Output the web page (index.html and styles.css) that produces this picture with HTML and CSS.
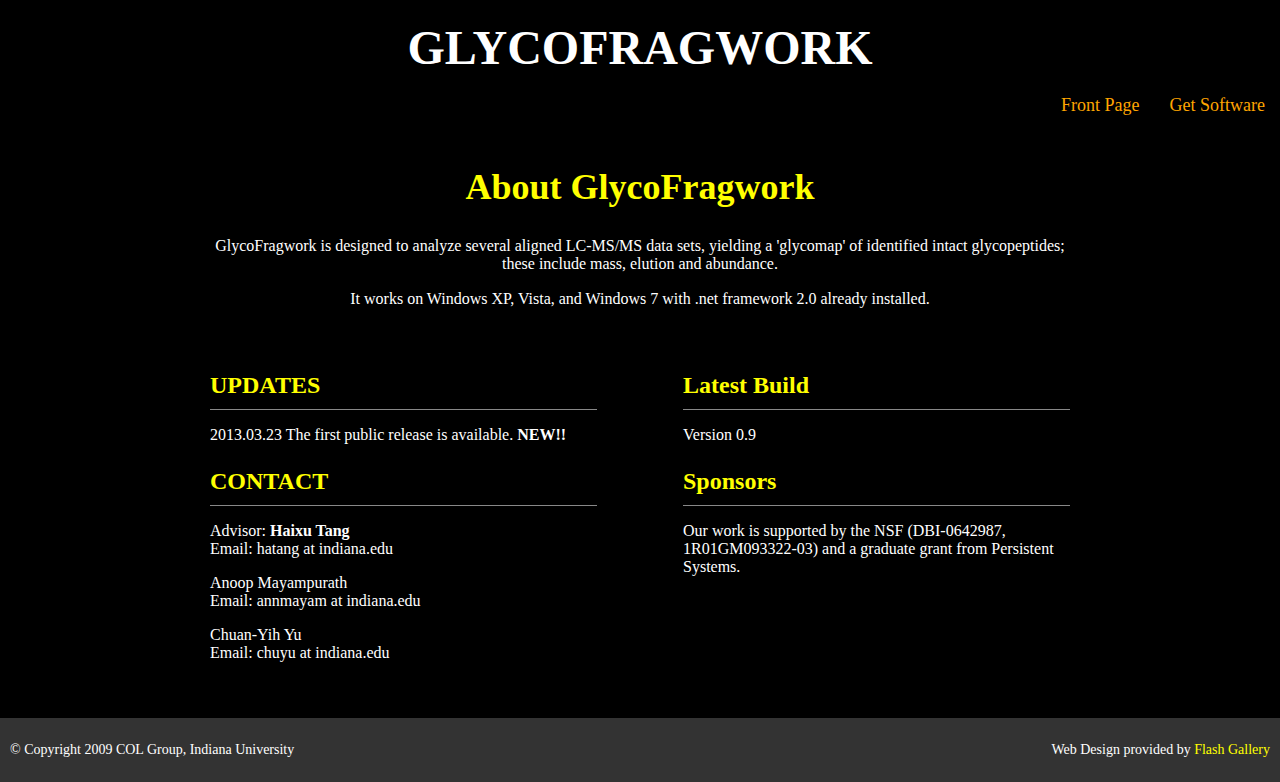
FILE: index.html
```html
<!DOCTYPE html>
<html>
<head>
<meta charset="utf-8">
<title>GlycoFragwork</title>
<link rel="stylesheet" href="styles.css">
</head>
<body>
<div class="page">
  <header class="header">
    <h1 class="site-title">GLYCOFRAGWORK</h1>
    <nav class="nav">
      <a href="#">Front Page</a>
      <a href="#">Get Software</a>
    </nav>
  </header>
  <main class="main">
    <section class="intro">
      <h2 class="intro-title">About GlycoFragwork</h2>
      <p>GlycoFragwork is designed to analyze several aligned LC-MS/MS data sets, yielding a 'glycomap' of identified intact glycopeptides; these include mass, elution and abundance.</p>
      <p>It works on Windows XP, Vista, and Windows 7 with .net framework 2.0 already installed.</p>
    </section>
    <div class="columns">
      <div class="col">
        <h3 class="sec-title">UPDATES</h3>
        <p>2013.03.23 The first public release is available. <b>NEW!!</b></p>
        <h3 class="sec-title">CONTACT</h3>
        <p>Advisor: <b>Haixu Tang</b><br>Email: hatang at indiana.edu</p>
        <p>Anoop Mayampurath<br>Email: annmayam at indiana.edu</p>
        <p>Chuan-Yih Yu<br>Email: chuyu at indiana.edu</p>
      </div>
      <div class="col">
        <h3 class="sec-title">Latest Build</h3>
        <p>Version 0.9</p>
        <h3 class="sec-title">Sponsors</h3>
        <p>Our work is supported by the NSF (DBI-0642987, 1R01GM093322-03) and a graduate grant from Persistent Systems.</p>
      </div>
    </div>
  </main>
  <footer class="footer">
    <span>&copy; Copyright 2009 COL Group, Indiana University</span>
    <span>Web Design provided by <a href="#">Flash Gallery</a></span>
  </footer>
</div>
</body>
</html>
```
FILE: styles.css
```css
html, body {
  margin: 0;
  padding: 0;
  background: #000;
}
body {
  font-family: "Liberation Serif", "Times New Roman", serif;
  font-size: 16px;
  color: #fff;
}
.page {
  min-height: 782px;
  display: flex;
  flex-direction: column;
}
.header {
  padding-top: 20px;
}
.site-title {
  margin: 0;
  text-align: center;
  font-size: 48px;
  font-weight: bold;
  line-height: 55px;
}
.nav {
  display: flex;
  justify-content: flex-end;
  gap: 30px;
  padding: 20px 15px 0 0;
  font-size: 18px;
}
.nav a {
  color: #ffa500;
  text-decoration: none;
}
.main {
  flex: 1;
  width: 860px;
  margin: 0 auto;
}
.intro {
  text-align: center;
  padding-top: 50px;
}
.intro-title {
  margin: 0 0 29px;
  font-size: 36px;
  color: #ffff00;
}
.intro p {
  margin: 0 0 17px;
}
.columns {
  display: flex;
  justify-content: space-between;
  margin-top: 63px;
}
.col {
  width: 45%;
}
.sec-title {
  margin: 0 0 16px;
  padding-bottom: 10px;
  border-bottom: 1px solid #888;
  font-size: 24px;
  color: #ffff00;
  line-height: 28px;
}
.col p {
  margin: 0 0 16px;
  line-height: 18px;
}
.col p + .sec-title {
  margin-top: 23px;
}
.footer {
  background: #333;
  height: 64px;
  display: flex;
  justify-content: space-between;
  align-items: center;
  padding: 0 10px;
  font-size: 14px;
  margin-top: 40px;
}
.footer a {
  color: #ffff00;
  text-decoration: none;
}
```
